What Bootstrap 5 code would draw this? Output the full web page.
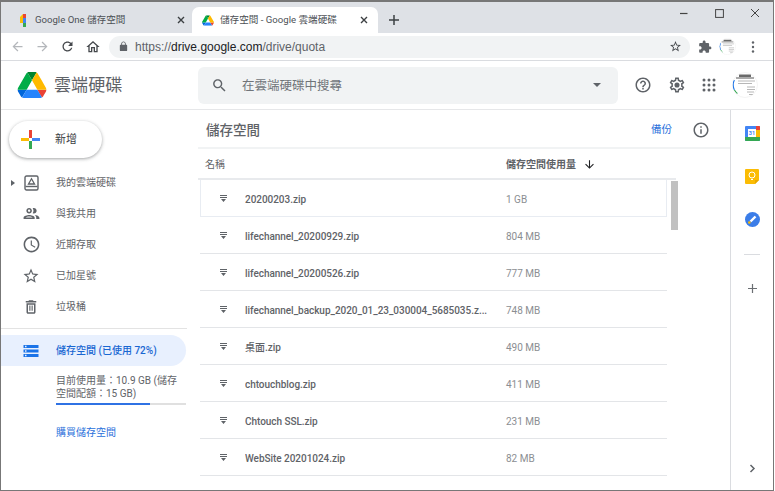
<!DOCTYPE html>
<html lang="zh-Hant">
<head>
<meta charset="utf-8">
<title>儲存空間 - Google 雲端硬碟</title>
<link href="https://cdn.jsdelivr.net/npm/bootstrap@5.3.0/dist/css/bootstrap.min.css" rel="stylesheet">
<style>
html,body{height:491px;overflow:hidden;background:#fff}
body{font-family:Roboto,"Noto Sans CJK TC",sans-serif;color:#5f6368;font-size:10px;line-height:1.2}
svg{display:block;flex:none}
.win{width:774px;height:491px;border:1px solid #777;border-top-width:2px;overflow:hidden}
.tabstrip{height:31px;background:#dee1e6;flex:none}
.gtab{width:186px;height:26px;padding:0 8px 0 10px;font-size:9.6px;color:#4d5156;border-radius:7px 7px 0 0}
.gtab1{width:190px;padding-left:17px;padding-right:4px}
.gtab2{background:#fff;margin-left:1px;color:#4d5156}
.gtab .ttl{margin-left:6px;flex:1 1 auto;white-space:nowrap}
.gtab1 .ttl{margin-left:7px}
.addtab{margin-left:10px;margin-bottom:7px}
.winbtns{margin-left:auto;width:94px;padding:0 13px 0 0;margin-top:-9px;align-self:center}
.toolbar{height:28px;border-bottom:1px solid #dadce0;padding:0 0 0 9px;flex:none}
.tbtn{width:25px}
.tbtn-home{width:18px}
.omni{width:581px;height:22px;margin-left:6px;border-radius:11px;background:#f1f3f4;padding:0 8px 0 9px;font:12px/1 "Liberation Sans",sans-serif;color:#5f6368}
.omni b{font-weight:400;color:#202124}
.omni .url{margin-left:6px;flex:1}
.tools{margin-left:8px;gap:7px}
.appbar{height:49px;border-bottom:1px solid #e6e7e9;flex:none}
.brand{width:197px;padding-left:16px;gap:7px}
.brandname{font-size:17px;color:#5f6368;letter-spacing:.1px;padding-top:1px}
.searchbox{width:420px;height:37px;background:#f1f3f4;border-radius:6px;padding:0 17px 0 13px;font-size:12.5px;color:#70757a}
.searchbox span{margin-left:14px;flex:1;padding-top:1px}
.caret{width:0;height:0;border:4px solid transparent;border-top-color:#5f6368;border-bottom:0}
.apptools{margin-left:16px}
.content{flex:1 1 auto;min-height:0}
.sidebar{width:197px;flex:none;padding-top:11px}
.newbtn{width:93px;height:37px;margin-left:8px;background:#fff;border:0;border-radius:19px;box-shadow:0 1px 3px rgba(60,64,67,.35),0 1px 4px rgba(60,64,67,.15);padding:0 0 0 12px;font-size:11px;color:#3c4043;gap:15px}
.navlist{margin-top:9px;padding:0}
.navrow{height:31px;font-size:10px;color:#5f6368;white-space:nowrap}
.arwtri{width:0;height:0;border:3.5px solid transparent;border-left:4px solid #5f6368;border-right:0;left:10px}
.ico-wrap{width:20px;margin:0 15px 0 20px;display:flex;justify-content:center}
.sep{height:1px;background:#e3e3e3;width:186px;margin-top:6px}
.activerow{width:185px;height:31px;margin-top:6px;background:#e8f0fe;border-radius:0 16px 16px 0;color:#1967d2;font-weight:500;font-size:10px}
.usage{margin:8px 0 0 55px;width:130px;font-size:10px;line-height:13px;color:#5f6368}
.usebar{height:2px;width:130px;background:#e0e0e0;margin-top:3px;border-radius:0}
.usebar .progress-bar{background:#2f72e4}
.buy{display:block;margin:22px 0 0 55px;font-size:10px;color:#2a6fdb;text-decoration:none}
.mainpane{width:532px;flex:none}
.pagehead{height:39px;padding:3px 20px 0 8px;border-bottom:2px solid #f1f3f4;flex:none}
.pagetitle{font-size:13.5px;font-weight:500;color:#5f6368;margin:0;line-height:1.2}
.backup{margin-left:auto;color:#2a6fdb;font-size:10.5px;text-decoration:none;margin-right:20px}
.colhead{height:31px;flex:none;font-size:10px;border-bottom:2px solid #e8eaed;padding:2px 0 0 7px;margin-right:54px}
.colname{width:301px}
.colsize{font-weight:600;color:#5f6368;gap:7px}
.fileswrap{flex:1 1 auto;min-height:0;position:relative}
.filerow{height:37px;width:467px;margin-left:2px;border-bottom:1px solid #e3e5e8;font-size:10px;padding:4px 0 0}
.filerow.firstrow{border:1px solid #e8ecf2;border-top:0}
.zipi{width:45px;padding-left:20px;margin-bottom:3px}
.firstrow .zipi{width:44px;padding-left:19px}
.fname{width:261px;font-weight:500;color:#5f6368;white-space:nowrap;overflow:hidden;letter-spacing:-.04px}
.fsize{color:#8b8e92}
.thumb{position:absolute;left:473px;top:1px;width:7px;height:49px;background:#c1c1c1}
.rail{width:43px;flex:none;border-left:1px solid #dadce0;padding-top:2px}
.railbtn{height:43px;width:42px}
.railsep{width:16px;height:1px;background:#dadce0;margin:13px 0 0 13px}
.railplus{margin:28px 0 0 0;width:42px}
.railnext{margin-top:auto;margin-bottom:17px;width:42px}
</style>
</head>
<body>
<svg width="0" height="0" class="position-absolute">
<defs>
<symbol id="drive" viewBox="0 0 87.3 78">
<path d="m6.6 66.85 3.85 6.65c.8 1.4 1.95 2.5 3.3 3.3l13.75-23.8h-27.5c0 1.55.4 3.1 1.2 4.5z" fill="#0066da"/>
<path d="m43.65 25-13.75-23.8c-1.35.8-2.5 1.9-3.3 3.3l-25.4 44a9.06 9.06 0 0 0 -1.2 4.5h27.5z" fill="#00ac47"/>
<path d="m73.55 76.8c1.35-.8 2.5-1.9 3.3-3.3l1.6-2.75 7.65-13.25c.8-1.4 1.2-2.95 1.2-4.5h-27.502l5.852 11.5z" fill="#ea4335"/>
<path d="m43.65 25 13.75-23.8c-1.35-.8-2.9-1.2-4.5-1.2h-18.5c-1.6 0-3.15.45-4.5 1.2z" fill="#00832d"/>
<path d="m59.8 53h-32.3l-13.75 23.8c1.35.8 2.9 1.2 4.5 1.2h50.8c1.6 0 3.15-.45 4.5-1.2z" fill="#2684fc"/>
<path d="m73.4 26.5-12.7-22c-.8-1.4-1.95-2.5-3.3-3.3l-13.75 23.8 16.15 28h27.45c0-1.55-.4-3.1-1.2-4.5z" fill="#ffba00"/>
</symbol>
<symbol id="zip" viewBox="0 0 7 7">
<path d="M0 0h7v1H0zM0 2h7v1H0zM1 4h5L3.500 7z" fill="#5f6368"/>
</symbol>
<clipPath id="avclip"><circle cx="13" cy="13" r="12.300"/></clipPath>
<symbol id="avatar" viewBox="0 0 26 26">
<circle cx="13" cy="13" r="12.500" fill="#fff" stroke="#ececec" stroke-width=".6"/>
<g clip-path="url(#avclip)">
<path d="M7 2.500h12v2.500H7z" fill="#6a6a6a"/>
<path d="M4 6h18" stroke="#555" stroke-width="1"/>
<path d="M2.200 8a12 12 0 0 0 0 10" fill="none" stroke="#1a73e8" stroke-width="1.400"/>
<path d="M2.400 18q1.500 2.500 3 3.500" fill="none" stroke="#34a853" stroke-width="1.200"/>
<path d="M6 9h17M6 11.500h14M15 15h8M15 17.500h8M15 20h7M17 22.500h4" stroke="#a5a5a5" stroke-width=".8" fill="none"/>
</g>
</symbol>
</defs>
</svg>

<div class="win d-flex flex-column">
  <div class="tabstrip d-flex align-items-end">
    <div class="gtab gtab1 d-flex align-items-center">
      <svg width="10" height="13" viewBox="0 0 10 13"><path d="M5 0h3v4H5z" fill="#ea4335"/><path d="M5 4h3v5H5z" fill="#4285f4"/><path d="M5 9h3v4H5z" fill="#34a853"/><path d="M2 3l3-3v9H2z" fill="#fbbc04"/></svg>
      <span class="ttl">Google One 儲存空間</span>
      <svg width="12" height="12" viewBox="0 0 12 12"><path d="M3 3l6 6M9 3l-6 6" stroke="#3c4043" stroke-width="1.400"/></svg>
    </div>
    <div class="gtab gtab2 d-flex align-items-center">
      <svg width="12" height="11" viewBox="0 0 87.3 78"><use href="#drive"/></svg>
      <span class="ttl">儲存空間 - Google 雲端硬碟</span>
      <svg width="12" height="12" viewBox="0 0 12 12"><path d="M3 3l6 6M9 3l-6 6" stroke="#3c4043" stroke-width="1.400"/></svg>
    </div>
    <svg class="addtab" width="12" height="12" viewBox="0 0 12 12"><path d="M6 1v10M1 6h10" stroke="#3c4043" stroke-width="1.500"/></svg>
    <div class="winbtns d-flex justify-content-between align-items-center">
      <svg width="9" height="9" viewBox="0 0 9 9"><path d="M1 4.500h7.500" stroke="#444" stroke-width="1.200"/></svg>
      <svg width="9" height="9" viewBox="0 0 9 9"><rect x=".6" y=".6" width="7.800" height="7.800" fill="none" stroke="#444" stroke-width="1"/></svg>
      <svg width="10" height="10" viewBox="0 0 10 10"><path d="M1 1l8 8M9 1l-8 8" stroke="#444" stroke-width="1"/></svg>
    </div>
  </div>

  <div class="toolbar d-flex align-items-center">
    <div class="tbtn"><svg width="15" height="15" viewBox="0 0 24 24"><path fill="#b4b7bb" d="M20 11H7.830l5.590-5.590L12 4l-8 8 8 8 1.410-1.410L7.830 13H20v-2z"/></svg></div>
    <div class="tbtn"><svg width="15" height="15" viewBox="0 0 24 24"><path fill="#b4b7bb" d="M4 11h12.170l-5.590-5.590L12 4l8 8-8 8-1.410-1.410L16.170 13H4v-2z"/></svg></div>
    <div class="tbtn"><svg width="15" height="15" viewBox="0 0 24 24"><path fill="#45484c" d="M17.650 6.350C16.200 4.900 14.210 4 12 4c-4.420 0-7.990 3.580-7.990 8s3.570 8 7.990 8c3.730 0 6.840-2.550 7.730-6h-2.080c-.82 2.330-3.040 4-5.650 4-3.310 0-6-2.690-6-6s2.690-6 6-6c1.660 0 3.140.69 4.220 1.780L13 11h7V4l-2.350 2.350z"/></svg></div>
    <div class="tbtn tbtn-home"><svg width="16" height="16" viewBox="0 0 24 24"><path fill="#45484c" d="M12 5.690l5 4.500V18h-2v-6H9v6H7v-7.810l5-4.500M12 3L2 12h3v8h6v-6h2v6h6v-8h3L12 3z"/></svg></div>
    <div class="omni d-flex align-items-center">
      <svg width="11" height="11" viewBox="0 0 24 24"><path fill="#5f6368" d="M18 8h-1V6c0-2.760-2.240-5-5-5S7 3.240 7 6v2H6c-1.100 0-2 .9-2 2v10c0 1.100.9 2 2 2h12c1.100 0 2-.9 2-2V10c0-1.100-.9-2-2-2zM8.900 6c0-1.710 1.390-3.100 3.100-3.100s3.100 1.390 3.100 3.100v2H8.900V6z"/></svg>
      <span class="url">https://<b>drive.google.com</b>/drive/quota</span>
      <svg width="13" height="13" viewBox="0 0 24 24"><path fill="#45484c" d="M22 9.240l-7.190-.62L12 2 9.190 8.630 2 9.240l5.460 4.730L5.820 21 12 17.270 18.180 21l-1.630-7.030L22 9.240zM12 15.400l-3.760 2.270 1-4.280-3.320-2.880 4.380-.38L12 6.100l1.710 4.040 4.380.38-3.320 2.880 1 4.280L12 15.400z"/></svg>
    </div>
    <div class="tools d-flex align-items-center">
      <svg width="14" height="14" viewBox="0 0 24 24"><path fill="#5f6368" d="M20.500 11H19V7c0-1.100-.9-2-2-2h-4V3.500C13 2.120 11.880 1 10.500 1S8 2.120 8 3.500V5H4c-1.100 0-1.990.9-1.990 2v3.800H3.500c1.490 0 2.700 1.210 2.700 2.700s-1.210 2.700-2.700 2.700H2V20c0 1.100.9 2 2 2h3.800v-1.500c0-1.490 1.210-2.700 2.700-2.700 1.490 0 2.700 1.210 2.700 2.700V22H17c1.100 0 2-.9 2-2v-4h1.500c1.380 0 2.500-1.120 2.500-2.500S21.880 11 20.500 11z"/></svg>
      <svg width="17" height="17" viewBox="0 0 26 26"><use href="#avatar"/></svg>
      <svg class="ms-2" width="4" height="12" viewBox="0 0 4 12"><circle cx="2" cy="1.500" r="1.200" fill="#5f6368"/><circle cx="2" cy="6" r="1.200" fill="#5f6368"/><circle cx="2" cy="10.500" r="1.200" fill="#5f6368"/></svg>
    </div>
  </div>

  <header class="appbar d-flex align-items-center">
    <div class="brand d-flex align-items-center">
      <svg width="30" height="26" viewBox="0 0 87.300 78"><use href="#drive"/></svg>
      <span class="brandname">雲端硬碟</span>
    </div>
    <div class="searchbox d-flex align-items-center">
      <svg width="17" height="17" viewBox="0 0 24 24"><path fill="#5f6368" d="M15.500 14h-.79l-.28-.27C15.410 12.590 16 11.110 16 9.500 16 5.910 13.090 3 9.500 3S3 5.910 3 9.500 5.910 16 9.500 16c1.610 0 3.090-.59 4.230-1.570l.27.28v.79l5 4.990L20.490 19l-4.990-5zm-6 0C7.010 14 5 11.990 5 9.500S7.010 5 9.500 5 14 7.010 14 9.500 11.990 14 9.500 14z"/></svg>
      <span>在雲端硬碟中搜尋</span>
      <div class="caret"></div>
    </div>
    <div class="apptools d-flex align-items-center">
      <svg width="18" height="18" viewBox="0 0 24 24"><path fill="#5f6368" d="M11 18h2v-2h-2v2zm1-16C6.480 2 2 6.480 2 12s4.480 10 10 10 10-4.480 10-10S17.520 2 12 2zm0 18c-4.410 0-8-3.590-8-8s3.590-8 8-8 8 3.590 8 8-3.590 8-8 8zm0-14c-2.210 0-4 1.790-4 4h2c0-1.100.9-2 2-2s2 .9 2 2c0 2-3 1.750-3 5h2c0-2.250 3-2.500 3-5 0-2.210-1.790-4-4-4z"/></svg>
      <svg class="ms-3" width="18" height="18" viewBox="0 0 24 24"><path fill="#5f6368" d="M19.430 12.980c.04-.32.07-.64.07-.98 0-.34-.03-.66-.07-.98l2.110-1.650c.19-.15.24-.42.12-.64l-2-3.460c-.09-.16-.26-.25-.44-.25-.06 0-.12.01-.17.03l-2.490 1c-.52-.4-1.080-.73-1.690-.98l-.38-2.650C14.460 2.180 14.250 2 14 2h-4c-.25 0-.46.18-.49.42l-.38 2.650c-.61.25-1.170.59-1.690.98l-2.490-1c-.06-.02-.12-.03-.18-.03-.17 0-.34.09-.43.25l-2 3.460c-.13.22-.07.49.12.64l2.110 1.650c-.04.32-.07.65-.07.98 0 .33.03.66.07.98l-2.110 1.650c-.19.15-.24.42-.12.64l2 3.460c.09.16.26.25.44.25.06 0 .12-.01.17-.03l2.490-1c.52.4 1.080.73 1.690.98l.38 2.650c.03.24.24.42.49.42h4c.25 0 .46-.18.49-.42l.38-2.650c.61-.25 1.170-.59 1.690-.98l2.490 1c.06.02.12.03.18.03.17 0 .34-.09.43-.25l2-3.460c.12-.22.07-.49-.12-.64l-2.110-1.650zm-1.980-1.710c.04.31.05.52.05.73 0 .21-.02.43-.05.73l-.14 1.130.89.7 1.080.84-.7 1.210-1.270-.51-1.040-.42-.9.68c-.43.32-.84.56-1.250.73l-1.060.43-.16 1.130-.2 1.350h-1.400l-.19-1.350-.16-1.130-1.060-.43c-.43-.18-.83-.41-1.230-.71l-.91-.7-1.060.43-1.270.51-.7-1.210 1.080-.84.89-.7-.14-1.130c-.03-.31-.05-.54-.05-.74s.02-.43.05-.73l.14-1.130-.89-.7-1.080-.84.7-1.210 1.270.51 1.040.42.9-.68c.43-.32.84-.56 1.250-.73l1.060-.43.16-1.130.2-1.350h1.390l.19 1.350.16 1.130 1.060.43c.43.18.83.41 1.230.71l.91.7 1.060-.43 1.270-.51.7 1.210-1.070.85-.89.7.14 1.130z"/><circle cx="12" cy="12" r="3.400" fill="#5f6368"/></svg>
      <svg class="ms-3" width="14" height="14" viewBox="0 0 14 14"><g fill="#5f6368"><circle cx="2" cy="2" r="1.500"/><circle cx="7" cy="2" r="1.500"/><circle cx="12" cy="2" r="1.500"/><circle cx="2" cy="7" r="1.500"/><circle cx="7" cy="7" r="1.500"/><circle cx="12" cy="7" r="1.500"/><circle cx="2" cy="12" r="1.500"/><circle cx="7" cy="12" r="1.500"/><circle cx="12" cy="12" r="1.500"/></g></svg>
      <svg class="ms-3" width="26" height="26" viewBox="0 0 26 26"><use href="#avatar"/></svg>
    </div>
  </header>

  <div class="content d-flex">
    <aside class="sidebar d-flex flex-column">
      <button type="button" class="newbtn d-flex align-items-center">
        <svg width="19" height="19" viewBox="0 0 19 19"><path d="M8 0h3v8H8z" fill="#ea4335"/><path d="M11 8h8v3h-8z" fill="#4285f4"/><path d="M8 11h3v8H8z" fill="#34a853"/><path d="M0 8h8v3H0z" fill="#fbbc04"/></svg>
        <span>新增</span>
      </button>
      <nav class="navlist d-flex flex-column">
        <div class="navrow d-flex align-items-center position-relative">
          <div class="arwtri position-absolute"></div>
          <div class="ico-wrap"><svg width="15" height="16" viewBox="0 0 15 16"><rect x="1" y="1" width="13" height="14" rx="1.500" fill="none" stroke="#5f6368" stroke-width="1.400"/><path d="M1.500 11.500h12" stroke="#5f6368" stroke-width="1.400"/><path d="M7.500 3.800L10.500 9h-6z" fill="none" stroke="#5f6368" stroke-width="1.300"/></svg></div>
          <span>我的雲端硬碟</span>
        </div>
        <div class="navrow d-flex align-items-center">
          <div class="ico-wrap"><svg width="19" height="19" viewBox="0 0 24 24"><path fill="#5f6368" d="M9 13.750c-2.340 0-7 1.170-7 3.500V19h14v-1.750c0-2.330-4.660-3.500-7-3.500zM4.340 17c.84-.58 2.870-1.250 4.660-1.250s3.820.67 4.660 1.250H4.340zM9 12c1.930 0 3.500-1.570 3.500-3.500S10.930 5 9 5 5.500 6.570 5.500 8.500 7.070 12 9 12zm0-5c.83 0 1.500.67 1.500 1.500S9.830 10 9 10s-1.500-.67-1.500-1.500S8.170 7 9 7zm7.040 6.810c1.160.84 1.960 1.960 1.960 3.440V19h4v-1.750c0-2.020-3.500-3.170-5.960-3.440zM15 12c1.930 0 3.500-1.570 3.500-3.500S16.930 5 15 5c-.54 0-1.040.13-1.500.35.63.89 1 1.980 1 3.150s-.37 2.260-1 3.150c.46.22.96.35 1.500.35z"/></svg></div>
          <span>與我共用</span>
        </div>
        <div class="navrow d-flex align-items-center">
          <div class="ico-wrap"><svg width="19" height="19" viewBox="0 0 24 24"><path fill="#5f6368" d="M11.990 2C6.470 2 2 6.480 2 12s4.470 10 9.990 10C17.520 22 22 17.520 22 12S17.520 2 11.990 2zM12 20c-4.420 0-8-3.580-8-8s3.580-8 8-8 8 3.580 8 8-3.580 8-8 8zm.5-13H11v6l5.250 3.150.75-1.230-4.500-2.670z"/></svg></div>
          <span>近期存取</span>
        </div>
        <div class="navrow d-flex align-items-center">
          <div class="ico-wrap"><svg width="18" height="18" viewBox="0 0 24 24"><path fill="#5f6368" d="M22 9.240l-7.190-.62L12 2 9.190 8.630 2 9.240l5.460 4.730L5.820 21 12 17.270 18.180 21l-1.630-7.030L22 9.240zM12 15.400l-3.760 2.270 1-4.280-3.320-2.880 4.380-.38L12 6.100l1.710 4.040 4.380.38-3.320 2.880 1 4.280L12 15.400z"/></svg></div>
          <span>已加星號</span>
        </div>
        <div class="navrow d-flex align-items-center">
          <div class="ico-wrap"><svg width="18" height="18" viewBox="0 0 24 24"><path fill="#5f6368" d="M16 9v10H8V9h8m-1.500-6h-5l-1 1H5v2h14V4h-3.500l-1-1zM18 7H6v12c0 1.100.9 2 2 2h8c1.100 0 2-.9 2-2V7z"/><path d="M10.500 10v7M13.500 10v7" stroke="#5f6368" stroke-width="1.500"/></svg></div>
          <span>垃圾桶</span>
        </div>
      </nav>
      <div class="sep"></div>
      <div class="activerow d-flex align-items-center">
        <div class="ico-wrap"><svg width="18" height="18" viewBox="0 0 24 24"><path fill="#1a73e8" d="M2 20h20v-4H2v4zm2-3h2v2H4v-2zM2 4v4h20V4H2zm4 3H4V5h2v2zm-4 7h20v-4H2v4zm2-3h2v2H4v-2z"/></svg></div>
        <span>儲存空間 (已使用 72%)</span>
      </div>
      <div class="usage">
        <div>目前使用量：10.9 GB (儲存空間配額：15 GB)</div>
        <div class="progress usebar" role="progressbar" aria-valuenow="72" aria-valuemin="0" aria-valuemax="100"><div class="progress-bar" style="width:72%"></div></div>
      </div>
      <a class="buy" href="#">購買儲存空間</a>
    </aside>

    <main class="mainpane d-flex flex-column">
      <div class="pagehead d-flex align-items-center">
        <h1 class="pagetitle">儲存空間</h1>
        <a class="backup" href="#">備份</a>
        <svg width="18" height="18" viewBox="0 0 24 24"><path fill="#5f6368" d="M11 7h2v2h-2zm0 4h2v6h-2zm1-9C6.480 2 2 6.480 2 12s4.480 10 10 10 10-4.480 10-10S17.520 2 12 2zm0 18c-4.410 0-8-3.590-8-8s3.590-8 8-8 8 3.590 8 8-3.590 8-8 8z"/></svg>
      </div>
      <div class="colhead d-flex align-items-center">
        <div class="colname">名稱</div>
        <div class="colsize d-flex align-items-center">
          <span>儲存空間使用量</span>
          <svg width="13" height="13" viewBox="0 0 24 24"><path fill="#202124" d="M20 12l-1.410-1.410L13 16.170V4h-2v12.170l-5.580-5.590L4 12l8 8 8-8z"/></svg>
        </div>
      </div>
      <div class="fileswrap">
        <div class="list-group list-group-flush">
          <div class="filerow firstrow d-flex align-items-center"><div class="zipi"><svg width="7" height="7"><use href="#zip"/></svg></div><div class="fname">20200203.zip</div><div class="fsize">1 GB</div></div>
          <div class="filerow d-flex align-items-center"><div class="zipi"><svg width="7" height="7"><use href="#zip"/></svg></div><div class="fname">lifechannel_20200929.zip</div><div class="fsize">804 MB</div></div>
          <div class="filerow d-flex align-items-center"><div class="zipi"><svg width="7" height="7"><use href="#zip"/></svg></div><div class="fname">lifechannel_20200526.zip</div><div class="fsize">777 MB</div></div>
          <div class="filerow d-flex align-items-center"><div class="zipi"><svg width="7" height="7"><use href="#zip"/></svg></div><div class="fname">lifechannel_backup_2020_01_23_030004_5685035.z...</div><div class="fsize">748 MB</div></div>
          <div class="filerow d-flex align-items-center"><div class="zipi"><svg width="7" height="7"><use href="#zip"/></svg></div><div class="fname">桌面.zip</div><div class="fsize">490 MB</div></div>
          <div class="filerow d-flex align-items-center"><div class="zipi"><svg width="7" height="7"><use href="#zip"/></svg></div><div class="fname">chtouchblog.zip</div><div class="fsize">411 MB</div></div>
          <div class="filerow d-flex align-items-center"><div class="zipi"><svg width="7" height="7"><use href="#zip"/></svg></div><div class="fname">Chtouch SSL.zip</div><div class="fsize">231 MB</div></div>
          <div class="filerow d-flex align-items-center"><div class="zipi"><svg width="7" height="7"><use href="#zip"/></svg></div><div class="fname">WebSite 20201024.zip</div><div class="fsize">82 MB</div></div>
        </div>
        <div class="thumb"></div>
      </div>
    </main>

    <aside class="rail d-flex flex-column">
      <div class="railbtn d-flex align-items-center justify-content-center">
        <svg width="15" height="15" viewBox="0 0 15 15"><rect width="15" height="15" rx="1" fill="#4285f4"/><path d="M11 0h3a1 1 0 0 1 1 1v3h-4z" fill="#ea4335"/><rect x="11" y="4" width="4" height="7" fill="#fbbc04"/><path d="M0 11h15v3a1 1 0 0 1-1 1H1a1 1 0 0 1-1-1z" fill="#34a853"/><rect x="3" y="3" width="8" height="8" fill="#fff"/><text x="7" y="9.200" font-size="5.500" font-family="Roboto" font-weight="700" text-anchor="middle" fill="#4285f4">31</text></svg>
      </div>
      <div class="railbtn d-flex align-items-center justify-content-center">
        <svg width="14" height="15" viewBox="0 0 14 15"><path d="M1 0h12a1 1 0 0 1 1 1v10l-4 4H1a1 1 0 0 1-1-1V1a1 1 0 0 1 1-1z" fill="#fbbc04"/><path d="M14 11h-4v4z" fill="#e8a800"/><circle cx="7" cy="6" r="3" fill="none" stroke="#fff" stroke-width="1"/><path d="M6 10.500h2" stroke="#fff" stroke-width="1.200"/></svg>
      </div>
      <div class="railbtn d-flex align-items-center justify-content-center">
        <svg width="15" height="15" viewBox="0 0 15 15"><circle cx="7.500" cy="7.500" r="7.500" fill="#3b7de8"/><path d="M5.500 9.500l5-5" stroke="#fff" stroke-width="2.400"/><circle cx="4.300" cy="10.500" r="1.300" fill="#fbbc04"/></svg>
      </div>
      <div class="railsep"></div>
      <div class="railplus d-flex justify-content-center"><svg width="11" height="11" viewBox="0 0 11 11"><path d="M5.500 1v9M1 5.500h9" stroke="#6b6f73" stroke-width="1.200"/></svg></div>
      <div class="railnext d-flex justify-content-center"><svg width="7" height="9" viewBox="0 0 7 9"><path d="M1.500 1l3.500 3.500L1.500 8" fill="none" stroke="#5f6368" stroke-width="1.500"/></svg></div>
    </aside>
  </div>
</div>
<script src="https://cdn.jsdelivr.net/npm/bootstrap@5.3.0/dist/js/bootstrap.bundle.min.js"></script>
</body>
</html>
